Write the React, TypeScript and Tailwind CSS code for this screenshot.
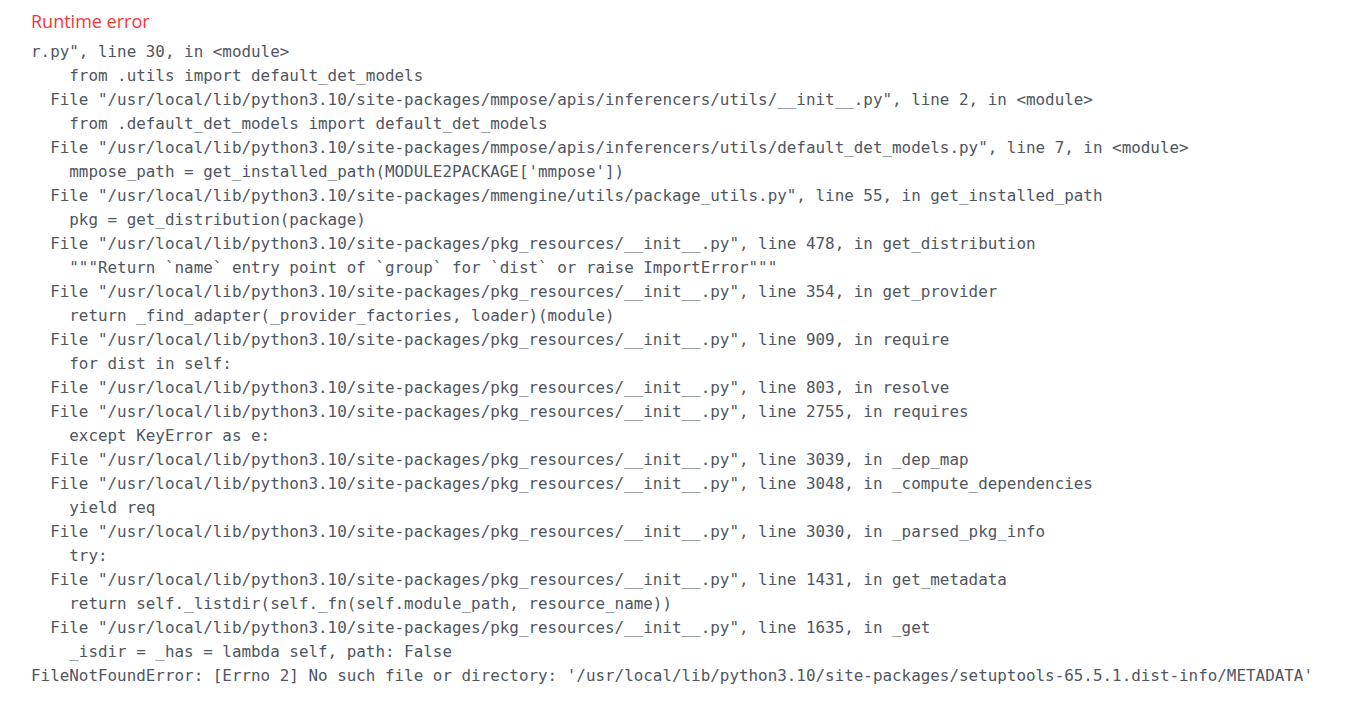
const trace = `r.py", line 30, in <module>
    from .utils import default_det_models
  File "/usr/local/lib/python3.10/site-packages/mmpose/apis/inferencers/utils/__init__.py", line 2, in <module>
    from .default_det_models import default_det_models
  File "/usr/local/lib/python3.10/site-packages/mmpose/apis/inferencers/utils/default_det_models.py", line 7, in <module>
    mmpose_path = get_installed_path(MODULE2PACKAGE['mmpose'])
  File "/usr/local/lib/python3.10/site-packages/mmengine/utils/package_utils.py", line 55, in get_installed_path
    pkg = get_distribution(package)
  File "/usr/local/lib/python3.10/site-packages/pkg_resources/__init__.py", line 478, in get_distribution
    """Return \`name\` entry point of \`group\` for \`dist\` or raise ImportError"""
  File "/usr/local/lib/python3.10/site-packages/pkg_resources/__init__.py", line 354, in get_provider
    return _find_adapter(_provider_factories, loader)(module)
  File "/usr/local/lib/python3.10/site-packages/pkg_resources/__init__.py", line 909, in require
    for dist in self:
  File "/usr/local/lib/python3.10/site-packages/pkg_resources/__init__.py", line 803, in resolve
  File "/usr/local/lib/python3.10/site-packages/pkg_resources/__init__.py", line 2755, in requires
    except KeyError as e:
  File "/usr/local/lib/python3.10/site-packages/pkg_resources/__init__.py", line 3039, in _dep_map
  File "/usr/local/lib/python3.10/site-packages/pkg_resources/__init__.py", line 3048, in _compute_dependencies
    yield req
  File "/usr/local/lib/python3.10/site-packages/pkg_resources/__init__.py", line 3030, in _parsed_pkg_info
    try:
  File "/usr/local/lib/python3.10/site-packages/pkg_resources/__init__.py", line 1431, in get_metadata
    return self._listdir(self._fn(self.module_path, resource_name))
  File "/usr/local/lib/python3.10/site-packages/pkg_resources/__init__.py", line 1635, in _get
    _isdir = _has = lambda self, path: False
FileNotFoundError: [Errno 2] No such file or directory: '/usr/local/lib/python3.10/site-packages/setuptools-65.5.1.dist-info/METADATA'`;

export default function App() {
  return (
    <div className="min-h-screen bg-white px-[31px] pt-[7px]">
      {/* Header */}
      <h1 className="font-['Open_Sans','Liberation_Sans',sans-serif] text-[18px] leading-[28px] text-[#ee3a3a]">
        Runtime error
      </h1>

      {/* Traceback */}
      <pre className="mt-[5px] whitespace-pre font-['DejaVu_Sans_Mono','Liberation_Mono',monospace] text-[15.9px] leading-[24px] text-[#505660]">
        {trace}
      </pre>
    </div>
  );
}
